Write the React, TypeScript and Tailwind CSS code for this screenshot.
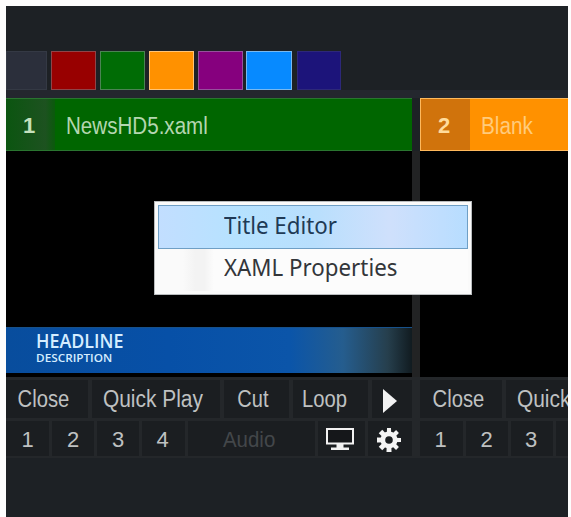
import type { ReactNode } from "react";

const swatches = [
  "ml-0 w-[41px] bg-[#2b2f3b] border-[#343944]",
  "ml-[4px] w-[45px] bg-[#980000] border-[#8f4448]",
  "ml-[4px] w-[45px] bg-[#006c05] border-[#4b8353]",
  "ml-[4px] w-[45px] bg-[#ff9100] border-[#ffc477]",
  "ml-[4px] w-[45px] bg-[#86007e] border-[#96509c]",
  "ml-[3px] w-[46px] bg-[#078aff] border-[#79b9f0]",
  "ml-[5px] w-[44px] bg-[#1c147a] border-[#2d2879]",
];

function Cell({ className, children }: { className: string; children?: ReactNode }) {
  return (
    <div className={`flex shrink-0 items-center justify-center whitespace-nowrap bg-[#1b1e21] ${className}`}>
      {children}
    </div>
  );
}

function Label({ className, children }: { className: string; children: ReactNode }) {
  return <span className={`inline-block shrink-0 whitespace-nowrap ${className}`}>{children}</span>;
}

function Play() {
  return (
    <svg width="16" height="26" viewBox="0 0 16 26" fill="#f2f2f2">
      <path d="M1 1 L15 13 L1 25 Z" />
    </svg>
  );
}

function Monitor() {
  return (
    <svg width="30" height="26" viewBox="0 0 30 26">
      <rect x="2" y="3" width="26" height="14.500" fill="#15171a" stroke="#f2f2f2" strokeWidth="2" />
      <path d="M11.500 18h7v3.500h5.500V24H6v-2.500h5.500z" fill="#f2f2f2" />
    </svg>
  );
}

function Gear() {
  return (
    <svg width="26" height="26" viewBox="-13 -13 26 26">
      <g fill="#f4f4f4">
        {[0, 45, 90, 135].map((a) => (
          <path key={a} d="M-2 -12H2L2.500 12H-2.500Z" transform={`rotate(${a})`} />
        ))}
        <circle r="8.500" />
      </g>
      <circle r="3.800" fill="#1b1e21" />
    </svg>
  );
}

export default function App() {
  return (
    <div className="relative h-[517px] w-[571px] overflow-hidden bg-[#fdfdfd] pl-[6px] pt-[6px] font-['Liberation_Sans',Arial,sans-serif] text-[23px] leading-none text-[#bfc1c1]">
      <div className="flex h-[511px] w-[562px] flex-col overflow-hidden bg-[#1d2125]">
        <div className="flex h-[92px] shrink-0 flex-col justify-end border-b-8 border-[#24272e]">
          <div className="flex h-[39px]">
            {swatches.map((c) => (
              <div key={c} className={`h-[39px] shrink-0 border ${c}`} />
            ))}
          </div>
        </div>

        <div className="flex h-[53px] shrink-0 gap-[8px]">
          <div className="flex w-[406px] shrink-0 border-y border-y-[#2a7530] bg-[#006600]">
            <div className="flex w-[49px] items-center bg-[linear-gradient(90deg,#0b5510,#1d5220_80%,#0a5a0c)] pl-[17px] pt-[2px] text-[#c5e0bd]">
              <Label className="text-[22px] font-bold">1</Label>
            </div>
            <div className="flex items-center pl-[11px] pt-[3px] text-[#b4d6b0]">
              <Label className="origin-left scale-x-[0.895]">NewsHD5.xaml</Label>
            </div>
          </div>
          <div className="flex w-[148px] shrink-0 border border-r-0 border-[#ffb95c] bg-[#ff9100]">
            <div className="flex w-[49px] items-center bg-[#d0730c] pl-[17px] pt-[2px] text-[#ffdc9c]">
              <Label className="text-[22px] font-bold">2</Label>
            </div>
            <div className="flex items-center pl-[11px] pt-[3px] text-[#ffcb7c]">
              <Label className="origin-left scale-x-[0.9]">Blank</Label>
            </div>
          </div>
        </div>

        <div className="flex h-[226px] shrink-0 bg-black">
          <div className="flex w-[406px] shrink-0 flex-col justify-end pb-[4px]">
            <div className="flex h-[46px] flex-col border-t border-[#17518b] bg-[linear-gradient(90deg,#084d9d_0%,#0750a7_40%,#0b55a9_70%,#255d8e_83%,#263f4d_94%,#111b20_100%)] pl-[30px] pt-[3px] text-[#d5edff]">
              <Label className="origin-left scale-x-[0.94] font-['Open_Sans',sans-serif] text-[19px] font-semibold leading-[20px]">HEADLINE</Label>
              <Label className="mt-[1px] origin-left scale-x-[1.07] font-['Open_Sans',sans-serif] text-[11px] font-semibold leading-[12px]">DESCRIPTION</Label>
            </div>
          </div>
          <div className="w-[8px] shrink-0 bg-[#222324]" />
        </div>

        <div className="flex h-[81px] shrink-0 flex-col gap-[3px] bg-[#24272a] pb-[2px] pt-[3px]">
          <div className="flex h-[38px] shrink-0 gap-[4px]">
            <Cell className="w-[82px] pr-[7px]"><Label className="scale-x-[0.88]">Close</Label></Cell>
            <Cell className="w-[128px] pr-[7px]"><Label className="scale-x-[0.91]">Quick Play</Label></Cell>
            <Cell className="w-[65px] pr-[8px]"><Label className="scale-x-[0.87]">Cut</Label></Cell>
            <Cell className="w-[75px] pr-[12px]"><Label className="scale-x-[0.88]">Loop</Label></Cell>
            <Cell className="w-[40px] pr-[4px] pt-[4px]"><Play /></Cell>
            <Cell className="ml-[4px] w-[82px] pr-[6px]"><Label className="scale-x-[0.88]">Close</Label></Cell>
            <Cell className="w-[128px] pr-[7px]"><Label className="scale-x-[0.91]">Quick Play</Label></Cell>
          </div>
          <div className="flex h-[35px] shrink-0 gap-[3px] text-[22px]">
            <Cell className="w-[43px] pt-[2px]">1</Cell>
            <Cell className="w-[42px] pt-[2px]">2</Cell>
            <Cell className="w-[42px] pt-[2px]">3</Cell>
            <Cell className="w-[43px] pr-[2px] pt-[2px]">4</Cell>
            <Cell className="w-[127px] pr-[5px] pt-[2px] text-[#43474a]"><Label className="scale-x-[0.93]">Audio</Label></Cell>
            <Cell className="w-[47px] pr-[4px]"><Monitor /></Cell>
            <Cell className="w-[44px] pr-[2px] pt-[2px]"><Gear /></Cell>
            <Cell className="ml-[5px] w-[43px] pr-[2px] pt-[2px]">1</Cell>
            <Cell className="w-[42px] pr-[1px] pt-[2px]">2</Cell>
            <Cell className="w-[42px] pr-[2px] pt-[2px]">3</Cell>
            <Cell className="w-[43px]" />
          </div>
        </div>
      </div>

      <div className="absolute left-[154px] top-[201px] flex h-[94px] w-[318px] flex-col border border-[#b9bcbe] bg-[#fafafa] p-[3px] font-['Noto_Sans',sans-serif] text-[#33363a]">
        <div className="flex h-[44px] shrink-0 items-center border border-[#6f9fc5] bg-[linear-gradient(90deg,#c2deff,#b6e2ff_25%,#b8dffd_50%,#cfe0fc_75%,#b7ddff)] pb-[4px] pl-[65px] text-[#203a55]">
          <Label className="origin-left scale-x-[0.97] text-[23px]">Title Editor</Label>
        </div>
        <div className="flex h-[42px] shrink-0 items-center bg-[linear-gradient(90deg,#fafafa_0_8%,#f3f3f3_12%_15%,#fcfcfc_18%)] pb-[5px] pl-[66px]">
          <Label className="origin-left scale-x-[0.97] text-[23px]">XAML Properties</Label>
        </div>
      </div>
    </div>
  );
}
